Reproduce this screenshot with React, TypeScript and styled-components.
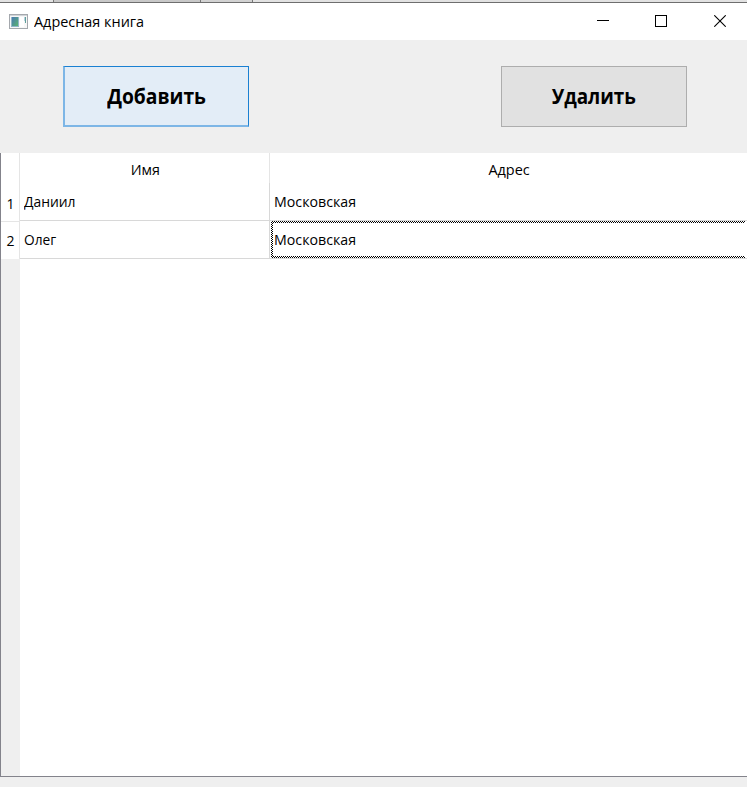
import React from "react";
import styled, { createGlobalStyle } from "styled-components";

const Global = createGlobalStyle`
  * { box-sizing: border-box; }
  html, body { margin: 0; background: #efefef; overflow: hidden; }
  button { font: inherit; color: inherit; border-radius: 0; }
`;

const Window = styled.div`
  display: flex;
  flex-direction: column;
  width: 747px;
  height: 787px;
  background: #efefef;
  color: #000;
  font-family: "Open Sans", "Noto Sans", sans-serif;
  font-size: 14px;
`;

const Backdrop = styled.div`
  display: flex;
  flex: none;
  height: 3px;
  border-bottom: 1px solid #6e6e6e;
`;

const Strip = styled.div<{ $w?: number; $tone: string }>`
  flex: ${(p) => (p.$w ? `0 0 ${p.$w}px` : "1")};
  background: ${(p) => p.$tone};
  border-right: ${(p) => (p.$w ? "1px solid #777" : "0")};
`;

const TitleBar = styled.header`
  display: flex;
  flex: none;
  align-items: center;
  height: 37px;
  padding-left: 9px;
  background: #fff;
`;

const Title = styled.span`
  flex: 1;
  margin-left: 6px;
  line-height: 20px;
  white-space: nowrap;
`;

const Fit = styled.span<{ $x: number; $origin?: string }>`
  display: inline-block;
  transform: scaleX(${(p) => p.$x});
  transform-origin: ${(p) => p.$origin ?? "left"} center;
`;

const WindowButton = styled.button<{ $w: number }>`
  display: flex;
  align-items: center;
  justify-content: center;
  width: ${(p) => p.$w}px;
  height: 37px;
  padding: 0 0 1px;
  border: 0;
  background: transparent;
`;

const Toolbar = styled.div`
  display: flex;
  flex: none;
  justify-content: space-between;
  height: 113px;
  padding: 26px 60px 0 63px;
`;

const Action = styled.button<{ $active?: boolean }>`
  width: 186px;
  height: 61px;
  padding: ${(p) => (p.$active ? "0" : "0 0 1px")};
  border: 1px solid ${(p) => (p.$active ? "#1a80d2" : "#adadad")};
  border-left: ${(p) => (p.$active ? "2px solid #7db6e6" : "1px solid #adadad")};
  border-bottom: ${(p) => (p.$active ? "2px solid #7db6e6" : "1px solid #adadad")};
  background: ${(p) => (p.$active ? "#e3edf7" : "#e1e1e1")};
  font-size: 20.5px;
  font-weight: 700;
`;

const Table = styled.div`
  display: flex;
  flex: none;
  height: 624px;
  border-left: 1px solid #83838b;
  border-bottom: 1px solid #83838b;
  background: #fff;
`;

const Gutter = styled.div`
  flex: 0 0 19px;
  background: #efefef;
`;

const GutterCell = styled.div<{ $h: number; $line?: boolean }>`
  display: flex;
  align-items: flex-end;
  justify-content: center;
  height: ${(p) => p.$h}px;
  padding: 0 0 ${(p) => (p.$line ? 7 : 8)}px 1px;
  border-right: 1px solid #e5e5e5;
  border-bottom: ${(p) => (p.$line ? "1px solid #e5e5e5" : "0")};
  background: #fff;
  line-height: 20px;
`;

const Column = styled.div<{ $w?: number }>`
  flex: ${(p) => (p.$w ? `0 0 ${p.$w}px` : "1")};
  min-width: 0;
`;

const Heading = styled.div<{ $line?: boolean }>`
  height: 30px;
  padding: 7px 0 0 1px;
  border-right: ${(p) => (p.$line ? "1px solid #e5e5e5" : "0")};
  text-align: center;
  line-height: 20px;
`;

const Cell = styled.div<{ $line?: boolean }>`
  height: 38px;
  padding: 9px 0 0 4px;
  border-right: ${(p) => (p.$line ? "1px solid #d8d8d8" : "0")};
  border-bottom: 1px solid #d8d8d8;
  line-height: 20px;
  white-space: nowrap;
`;

const FocusedCell = styled(Cell)`
  padding: 0 2px 0 1px;
`;

const FocusRing = styled.div`
  height: 37px;
  padding: 2px 0 2px 2px;
  background: conic-gradient(#000 25%, #fff 0 50%, #000 0 75%, #fff 0) 0 0 / 2px 2px;
`;

const FocusContent = styled.div`
  height: 33px;
  padding: 7px 0 0 1px;
  background: #fff;
`;

const AppIcon = () => (
  <svg width="19" height="15" viewBox="0 0 19 15" shapeRendering="crispEdges">
    <defs>
      <linearGradient id="pane" x1="0" y1="0" x2="1" y2="1">
        <stop offset="0" stopColor="#4a78b4" />
        <stop offset="1" stopColor="#58b36f" />
      </linearGradient>
    </defs>
    <rect x="0.5" y="0.5" width="18" height="14" fill="#f7f7f7" stroke="#a4a8ad" />
    <rect x="1" y="1" width="17" height="1" fill="#d0d4d8" />
    <rect x="2" y="3" width="8" height="10" fill="#8fb6c8" />
    <rect x="3" y="3" width="6" height="9" fill="url(#pane)" />
    <rect x="11" y="3" width="4" height="10" fill="#fff" />
    <rect x="15" y="3" width="1" height="4" fill="#b9d0e0" />
    <rect x="16" y="3" width="1" height="6" fill="#5f9f9a" />
  </svg>
);

export default function App() {
  return (
    <>
      <Global />
      <Window>
        <Backdrop>
          <Strip $w={54} $tone="#e2e2e2" />
          <Strip $w={147} $tone="#c8c8c8" />
          <Strip $w={52} $tone="#d2d2d2" />
          <Strip $tone="#e2e2e2" />
        </Backdrop>
        <TitleBar>
          <AppIcon />
          <Title><Fit $x={1.03}>Адресная книга</Fit></Title>
          <WindowButton $w={52} aria-label="Свернуть">
            <svg width="12" height="12" shapeRendering="crispEdges"><path d="M0 5.5h12" stroke="#000" /></svg>
          </WindowButton>
          <WindowButton $w={64} aria-label="Развернуть">
            <svg width="12" height="12" shapeRendering="crispEdges"><rect x="0.5" y="0.5" width="11" height="11" fill="none" stroke="#000" /></svg>
          </WindowButton>
          <WindowButton $w={54} aria-label="Закрыть">
            <svg width="12" height="12"><path d="M0.3 0.3L11.7 11.7M11.7 0.3L0.3 11.7" stroke="#000" strokeWidth="1.1" /></svg>
          </WindowButton>
        </TitleBar>
        <Toolbar>
          <Action $active><Fit $x={0.94} $origin="center">Добавить</Fit></Action>
          <Action><Fit $x={0.92} $origin="center">Удалить</Fit></Action>
        </Toolbar>
        <Table>
          <Gutter>
            <GutterCell $h={69} $line>1</GutterCell>
            <GutterCell $h={37}>2</GutterCell>
          </Gutter>
          <Column $w={250}>
            <Heading $line><Fit $x={1.02} $origin="center">Имя</Fit></Heading>
            <Cell $line><Fit $x={0.99}>Даниил</Fit></Cell>
            <Cell $line><Fit $x={0.98}>Олег</Fit></Cell>
          </Column>
          <Column>
            <Heading><Fit $x={1.03} $origin="center">Адрес</Fit></Heading>
            <Cell><Fit $x={1.015}>Московская</Fit></Cell>
            <FocusedCell>
              <FocusRing>
                <FocusContent><Fit $x={1.015}>Московская</Fit></FocusContent>
              </FocusRing>
            </FocusedCell>
          </Column>
        </Table>
      </Window>
    </>
  );
}
